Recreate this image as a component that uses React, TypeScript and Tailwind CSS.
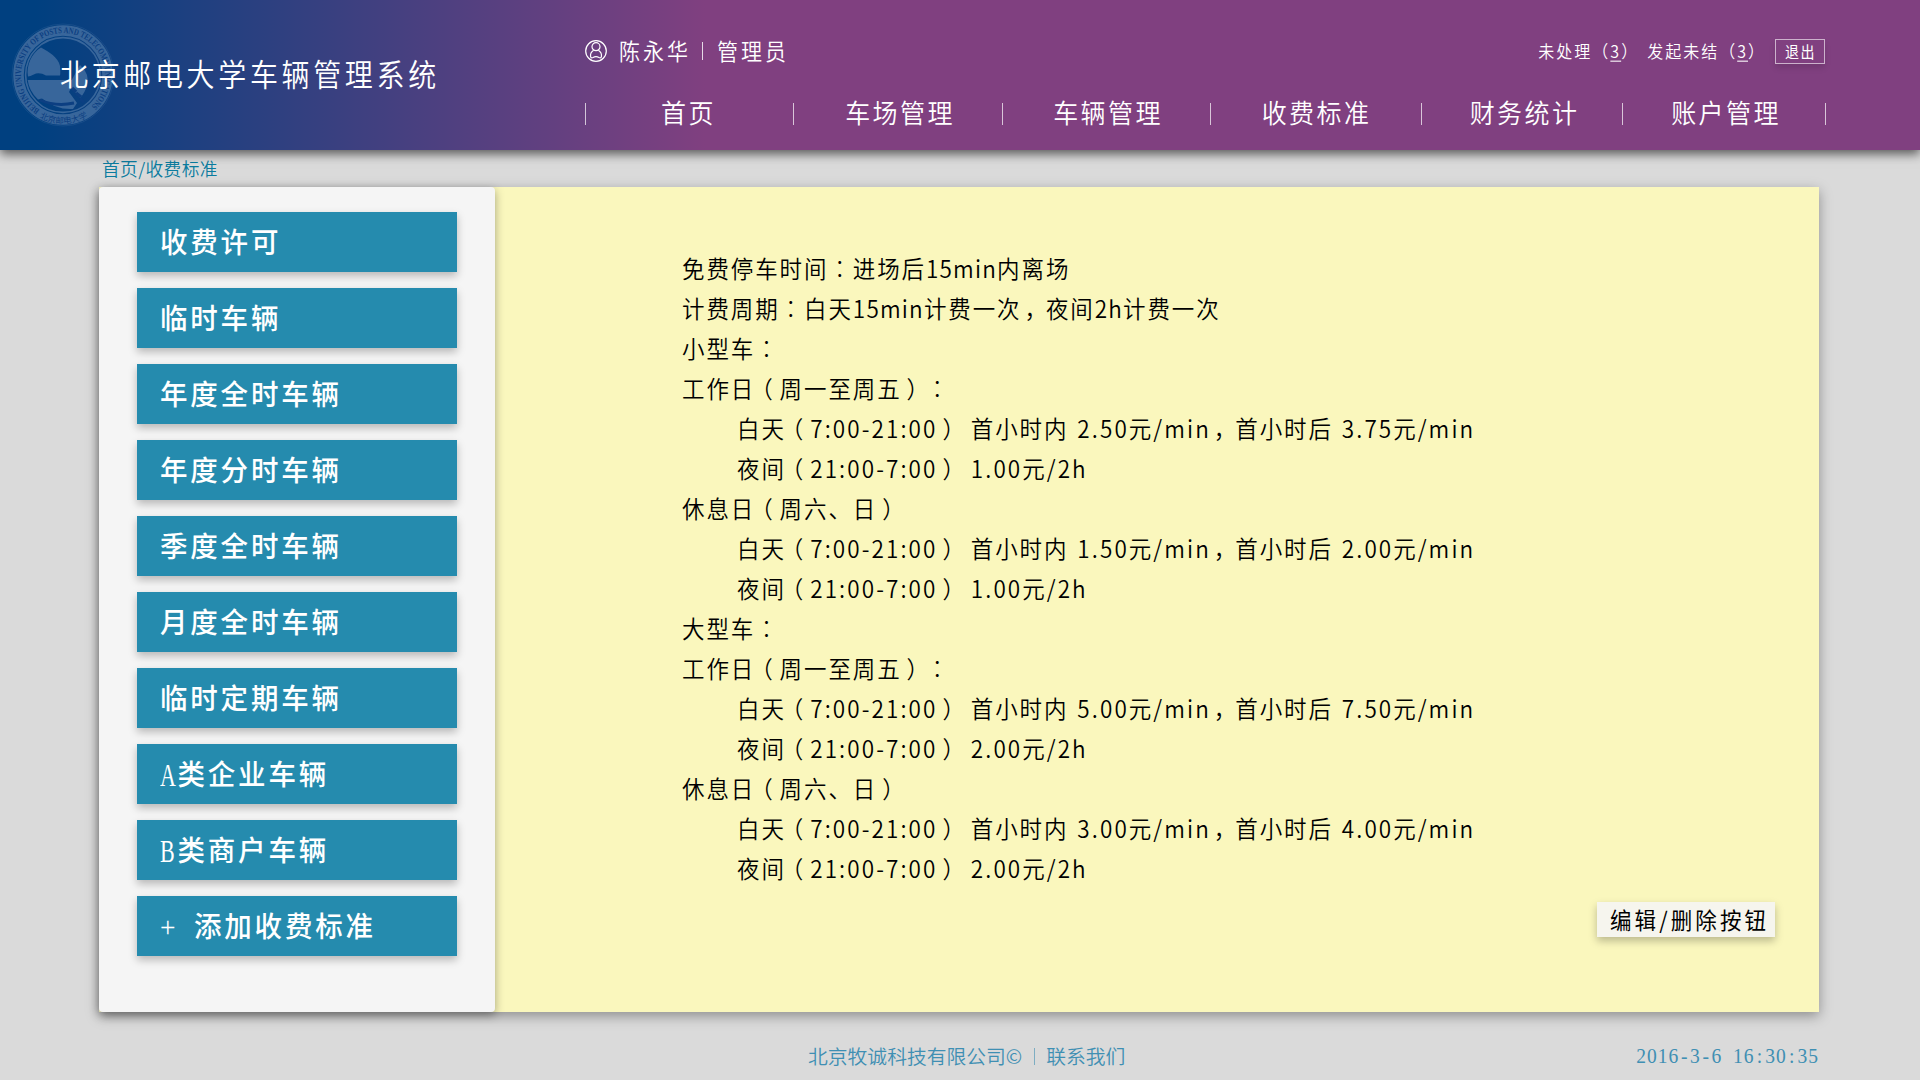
import { Fragment } from "react";

const NAV = [
  { label: "首页", cell: "w-[208px]", shift: "pr-[2px]" },
  { label: "车场管理", cell: "w-[209px]", shift: "pl-[4px]" },
  { label: "车辆管理", cell: "w-[208px]", shift: "pl-[3px]" },
  { label: "收费标准", cell: "w-[211px]", shift: "pl-px" },
  { label: "财务统计", cell: "w-[201px]", shift: "pl-[5px]" },
  { label: "账户管理", cell: "w-[203px]", shift: "pl-[4px]" },
];

const MENU = [
  "收费许可",
  "临时车辆",
  "年度全时车辆",
  "年度分时车辆",
  "季度全时车辆",
  "月度全时车辆",
  "临时定期车辆",
  "A类企业车辆",
  "B类商户车辆",
  "+ 添加收费标准",
];

type Line = { text: string; indent?: boolean };

const LINES: Line[] = [
  { text: "免费停车时间：进场后15min内离场" },
  { text: "计费周期：白天15min计费一次，夜间2h计费一次" },
  { text: "小型车：" },
  { text: "工作日（周一至周五）：" },
  { text: "白天（7:00-21:00） 首小时内 2.50元/min，首小时后 3.75元/min", indent: true },
  { text: "夜间（21:00-7:00） 1.00元/2h", indent: true },
  { text: "休息日（周六、日）" },
  { text: "白天（7:00-21:00） 首小时内 1.50元/min，首小时后 2.00元/min", indent: true },
  { text: "夜间（21:00-7:00） 1.00元/2h", indent: true },
  { text: "大型车：" },
  { text: "工作日（周一至周五）：" },
  { text: "白天（7:00-21:00） 首小时内 5.00元/min，首小时后 7.50元/min", indent: true },
  { text: "夜间（21:00-7:00） 2.00元/2h", indent: true },
  { text: "休息日（周六、日）" },
  { text: "白天（7:00-21:00） 首小时内 3.00元/min，首小时后 4.00元/min", indent: true },
  { text: "夜间（21:00-7:00） 2.00元/2h", indent: true },
];

const PUNCT: Record<string, string> = {
  "：": "font-light font-['Noto_Sans_CJK_TC',sans-serif]",
  "，": "inline-block w-[24.4px] translate-x-[3px]",
  "（": "inline-block w-[24.4px] -translate-x-[5px]",
  "）": "inline-block w-[24.4px] translate-x-[5px]",
};

function RuleText({ text, wide }: { text: string; wide?: boolean }) {
  const parts = text.split(/([：，（）]|[\x20-\x7e]+)/).filter(Boolean);
  return (
    <>
      {parts.map((p, i) =>
        PUNCT[p] ? (
          <span key={i} className={PUNCT[p]}>
            {p}
          </span>
        ) : /^[\x20-\x7e]/.test(p) ? (
          <span key={i} className={wide ? "tracking-[2.1px] [word-spacing:1.8px]" : "tracking-[1.2px]"}>
            {p}
          </span>
        ) : (
          <Fragment key={i}>{p}</Fragment>
        )
      )}
    </>
  );
}

function Seal() {
  return (
    <svg viewBox="0 0 104 104" className="h-[104px] w-[104px] shrink-0" fill="none">
      <defs>
        <path id="ringTop" d="M 28.8 87 A 42 42 0 1 1 77.2 85.6" />
        <path id="ringBottom" d="M 28.4 94.6 A 48.6 48.6 0 0 0 76.5 94" />
      </defs>
      <circle cx="52" cy="52" r="51" stroke="#3d6fa5" strokeOpacity=".35" strokeWidth=".8" />
      <circle cx="52" cy="52" r="44.5" stroke="#38669b" strokeWidth="10.5" />
      <circle cx="52" cy="52" r="37.4" stroke="#38669b" strokeWidth="1.6" />
      <path
        d="M30 24.5 C38 29 47 34 49 43 Q49.6 50 49 52.6 H35 Q30 49.5 25 50.5 Q20 53 17 53.6 C15 42 21 30 30 24.5Z"
        fill="#38669b"
      />
      <path
        d="M16.7 57 H76 Q74 61 70.5 64 L60 65 L58 69 L66 80 L62 86 Q45 87 31 75.5 L27 76.5 Q18 68 16.7 57Z"
        fill="#38669b"
      />
      <path d="M69 42 Q79 51 76 62 Q74 70 69 75 L58 62" fill="#38669b" />
      <path d="M61 65 l4 4 M65 70 l5 4 M69 76 l4 3" stroke="#0c3f82" strokeWidth="3.4" />
      <path d="M29 77 Q45 84 63 80" stroke="#0c3f82" strokeWidth="3" />
      <text fill="#0c3f82" fontSize="8.8" fontFamily="'Liberation Serif', serif" fontWeight="700">
        <textPath href="#ringTop" textLength="208" lengthAdjust="spacingAndGlyphs">
          BEIJING UNIVERSITY OF POSTS AND TELECOMMUNICATIONS
        </textPath>
      </text>
      <text fill="#0c3f82" fontSize="8.4" fontFamily="'Noto Sans CJK SC', sans-serif">
        <textPath href="#ringBottom">北京邮电大学</textPath>
      </text>
    </svg>
  );
}

function UserIcon() {
  return (
    <svg viewBox="0 0 22 22" className="h-[22px] w-[22px]" fill="none" stroke="#fff" strokeWidth="1.2">
      <circle cx="11" cy="11" r="10.3" />
      <circle cx="11" cy="6.7" r="4" />
      <path d="M8.6 10.2 C5.8 12 5.2 14.2 5.6 16.6 Q6 18.4 8 17.5 Q11 15.8 14 17.5 Q16 18.4 16.4 16.6 C16.8 14.2 16.2 12 13.4 10.2" />
    </svg>
  );
}

function Clock({ value }: { value: string }) {
  return (
    <span className="mt-[2px] scale-y-[1.05] font-['Liberation_Serif',serif] text-[19.5px] tracking-[1px] whitespace-pre">
      {value.split(/([-: ])/).map((p, i) =>
        /[-: ]/.test(p) ? (
          <span key={i} className="inline-block w-[10.75px] text-center">
            {p}
          </span>
        ) : (
          <Fragment key={i}>{p}</Fragment>
        )
      )}
    </span>
  );
}

function MenuLabel({ text }: { text: string }) {
  const latin = /^[AB]/.test(text);
  return (
    <span className="scale-y-[1.05] whitespace-pre">
      {latin ? (
        <>
          <span className="inline-block w-[17.5px]">
            <span className="inline-block origin-left scale-x-[0.8] scale-y-[1.08]">{text[0]}</span>
          </span>
          {text.slice(1)}
        </>
      ) : (
        text
      )}
    </span>
  );
}

export default function App() {
  return (
    <div className="flex h-[1080px] w-[1920px] flex-col overflow-hidden bg-[#dadada] font-['Noto_Sans_CJK_SC',sans-serif] [text-spacing-trim:space-all]">
      <header className="z-10 flex h-[150px] shrink-0 bg-[linear-gradient(90deg,#004080_35px,#804080_705px)] text-white shadow-[0_4px_10px_rgba(0,0,0,0.6)]">
        <div className="flex w-[585px] items-center pl-[11px]">
          <Seal />
          <h1 className="-mt-[4px] -ml-[55px] scale-y-[1.1] text-[28px] font-[350] tracking-[3.65px] whitespace-nowrap">
            北京邮电大学车辆管理系统
          </h1>
        </div>
        <div className="flex w-[1241px] flex-col">
          <div className="mt-[31px] flex h-10 items-center justify-between">
            <div className="flex items-center text-[21px] font-[350] tracking-[3px]">
              <UserIcon />
              <span className="ml-[12px] scale-y-[1.07]">陈永华</span>
              <span className="ml-[11px] h-[18px] w-px bg-white/80" />
              <span className="ml-[14px] scale-y-[1.07]">管理员</span>
            </div>
            <div className="mr-px flex items-center text-[16px] font-[350] tracking-[2px]">
              <span className="scale-y-[1.07]">
                未处理（<u className="underline-offset-2">3</u>）
              </span>
              <span className="ml-[8px] scale-y-[1.07]">
                发起未结（<u className="underline-offset-2">3</u>）
              </span>
              <button className="ml-[9px] flex h-[25px] w-[50px] items-center justify-center border border-white/60 pl-px text-[14px] font-normal tracking-[1.5px] shadow-[0_4px_6px_rgba(0,0,0,0.12)]">
                <span className="scale-y-[1.1]">退出</span>
              </button>
            </div>
          </div>
          <nav className="mt-[21px] flex h-11 items-center text-[25px] font-[350] tracking-[2.4px]">
            {NAV.map((n) => (
              <div key={n.label} className={`flex items-center ${n.cell}`}>
                <span className="h-[22px] w-px bg-white/70" />
                <span className={`-mt-[4px] flex-1 text-center ${n.shift}`}>
                  <span className="inline-block scale-y-[1.06]">{n.label}</span>
                </span>
              </div>
            ))}
            <span className="h-[22px] w-px shrink-0 bg-white/70" />
          </nav>
        </div>
      </header>

      <div className="flex h-[37px] shrink-0 items-center pl-[102px] text-[17.7px] font-[350] tracking-[0.4px] text-[#0b7c9f]">
        <span>首页/收费标准</span>
      </div>

      <main className="ml-[99px] flex h-[825px] w-[1720px] shrink-0 bg-[#faf7bd] shadow-[0_4px_12px_rgba(0,0,0,0.35)]">
        <aside className="flex w-[396px] shrink-0 flex-col gap-4 rounded-[4px] bg-[#f5f5f5] px-[38px] pt-[25px] shadow-[0_3px_10px_rgba(0,0,0,0.35)]">
          {MENU.map((m) => (
            <button
              key={m}
              className="flex h-[60px] w-[320px] shrink-0 items-center bg-[#258bae] pt-[3px] pl-[23px] font-['Liberation_Serif','Noto_Sans_CJK_SC',sans-serif] text-[27.5px] font-medium tracking-[2.8px] text-white shadow-[0_4px_8px_rgba(0,0,0,0.25)] [word-spacing:6px]"
            >
              <MenuLabel text={m} />
            </button>
          ))}
        </aside>
        <section className="flex flex-1 flex-col pt-[60.5px] pl-[187px]">
          {LINES.map((l, i) => (
            <p
              key={i}
              className={`h-10 text-[22.5px] leading-10 font-[350] tracking-[1.9px] whitespace-pre text-black ${l.indent ? "pl-[55px]" : ""}`}
            >
              <span className="inline-block scale-y-[1.05]">
                <RuleText text={l.text} wide={l.indent} />
              </span>
            </p>
          ))}
          <button className="mt-[14.5px] mr-[44px] flex h-[35px] w-[178px] items-center self-end bg-[#f6f5ee] pb-px pl-[13px] text-[21.5px] tracking-[3.1px] text-black shadow-[0_4px_8px_rgba(0,0,0,0.25)]">
            <span className="scale-y-[1.06] whitespace-nowrap">编辑/删除按钮</span>
          </button>
        </section>
      </main>

      <footer className="flex flex-1 items-center justify-between pt-[20px] pr-[101px] pl-[808px] text-[#3f8fb3]">
        <div className="flex items-center text-[19.8px] font-[350]">
          <span>北京牧诚科技有限公司©</span>
          <span className="mr-[11px] ml-[12px] h-[17px] w-px bg-[#3f8fb3]/60" />
          <span>联系我们</span>
        </div>
        <Clock value="2016-3-6 16:30:35" />
      </footer>
    </div>
  );
}
